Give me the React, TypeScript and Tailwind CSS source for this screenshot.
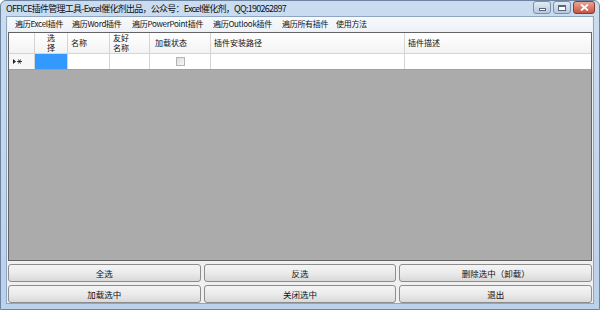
const menus = [
  { label: "遍历Excel插件", w: "w-[57px]" },
  { label: "遍历Word插件", w: "w-[60px]" },
  { label: "遍历PowerPoint插件", w: "w-[81px]" },
  { label: "遍历Outlook插件", w: "w-[69px]" },
  { label: "遍历所有插件", w: "w-[54px]" },
  { label: "使用方法", w: "w-[50px]" },
];

const cols = [
  { key: "row", w: "w-[26px]" },
  { key: "sel", w: "w-[33px]" },
  { key: "name", w: "w-[42px]" },
  { key: "friendly", w: "w-[40px]" },
  { key: "state", w: "w-[61px]" },
  { key: "path", w: "w-[194px]" },
  { key: "desc", w: "flex-1" },
];

function WinButton({ kind }: { kind: "min" | "max" | "close" }) {
  const base = "h-[13px] flex items-center justify-center rounded-[3px] border";
  if (kind === "close") {
    return (
      <div className={`${base} w-[22px] border-[#8a3b30] bg-gradient-to-b from-[#e8a595] to-[#c7523f]`}>
        <svg width="9" height="7" viewBox="0 0 9 7">
          <path d="M1 0.5 L8 6.5 M8 0.5 L1 6.5" stroke="#fff" strokeWidth="1.8" />
        </svg>
      </div>
    );
  }
  return (
    <div className={`${base} w-[18px] border-[#7d8fa8] bg-gradient-to-b from-[#e3ebf5] to-[#b7c8dd]`}>
      {kind === "min" ? (
        <div className="w-[7px] h-[3px] mt-[4px] bg-white border border-[#59677a]" />
      ) : (
        <div className="w-[8px] h-[6px] bg-white border border-[#59677a] border-t-2" />
      )}
    </div>
  );
}

function Btn({ label }: { label: string }) {
  return (
    <button className="flex-1 h-[18px] rounded-[3px] border border-[#8d8d8d] bg-gradient-to-b from-[#f4f4f4] via-[#ebebeb] to-[#d9d9d9] text-[8.5px] leading-none text-[#111]">
      {label}
    </button>
  );
}

export default function App() {
  return (
    <div
      className="w-[600px] h-[310px] flex flex-col bg-gradient-to-b from-[#cadcf0] to-[#bcd1ea] border border-[#6d84a0] rounded-t-[6px] overflow-hidden"
      style={{ fontFamily: '"Noto Sans CJK SC", "Noto Sans", sans-serif' }}
    >
      {/* Title bar */}
      <div className="h-[20px] flex items-center pl-[5px] pr-[4px]">
        <span className="text-[9px] leading-none text-[#111] tracking-[-0.75px] whitespace-nowrap">
          OFFICE插件管理工具-Excel催化剂出品，公众号：Excel催化剂，QQ:190262897
        </span>
        <div className="ml-auto flex gap-[2px] mt-[-2px]">
          <WinButton kind="min" />
          <WinButton kind="max" />
          <WinButton kind="close" />
        </div>
      </div>

      {/* Client area */}
      <div className="flex-1 mx-[5px] mb-[5px] bg-[#f0f0f0] border border-[#8fa6c2] flex flex-col px-[1px]">
        {/* Menu */}
        <div className="h-[14px] flex items-center pl-[7px] bg-gradient-to-b from-[#f8fafc] to-[#eef2f7] text-[8px] leading-none text-[#111]">
          {menus.map((m) => (
            <span key={m.label} className={`${m.w} whitespace-nowrap tracking-[-0.3px]`}>{m.label}</span>
          ))}
        </div>

        {/* Grid */}
        <div className="mt-[1px] h-[229px] border border-[#646464] bg-[#ababab] flex flex-col">
          <div className="h-[21px] flex bg-gradient-to-b from-white to-[#f3f3f3] border-b border-[#d5d5d5] text-[8px] text-[#111] leading-none">
            <div className={`${cols[0].w} border-r border-[#d5d5d5]`} />
            <div className={`${cols[1].w} border-r border-[#d5d5d5] flex flex-col items-center justify-center leading-[10px] overflow-hidden`}>
              <span>选</span>
              <span>择</span>
            </div>
            <div className={`${cols[2].w} border-r border-[#d5d5d5] pl-[3px] pt-[6px]`}>名称</div>
            <div className={`${cols[3].w} border-r border-[#d5d5d5] pl-[3px] flex flex-col justify-center leading-[10px]`}>
              <span>友好</span>
              <span>名称</span>
            </div>
            <div className={`${cols[4].w} border-r border-[#d5d5d5] pl-[5px] pt-[6px]`}>加载状态</div>
            <div className={`${cols[5].w} border-r border-[#d5d5d5] pl-[3px] pt-[6px]`}>插件安装路径</div>
            <div className={`${cols[6].w} pl-[3px] pt-[6px]`}>插件描述</div>
          </div>
          <div className="h-[16px] flex bg-white border-b border-[#a0a0a0]">
            <div className={`${cols[0].w} border-r border-[#d5d5d5] bg-[#f7f7f7] flex items-center pl-[4px]`}>
              <svg width="9" height="5" viewBox="0 0 9 5">
                <path d="M0 0 L3 2.5 L0 5 Z" fill="#222" />
                <path d="M4 2.5 H9 M5.5 0.5 L7.5 4.5 M7.5 0.5 L5.5 4.5" stroke="#222" strokeWidth="0.9" />
              </svg>
            </div>
            <div className={`${cols[1].w} border-r border-[#d5d5d5] bg-[#3399ff]`} />
            <div className={`${cols[2].w} border-r border-[#d5d5d5]`} />
            <div className={`${cols[3].w} border-r border-[#d5d5d5]`} />
            <div className={`${cols[4].w} border-r border-[#d5d5d5] flex items-center justify-center`}>
              <div className="w-[9px] h-[9px] border border-[#b4b4b4] bg-gradient-to-br from-[#dedede] to-[#f7f7f7]" />
            </div>
            <div className={`${cols[5].w} border-r border-[#d5d5d5]`} />
            <div className={cols[6].w} />
          </div>
        </div>

        {/* Buttons */}
        <div className="mt-[3px] flex flex-col gap-[3px]">
          <div className="flex gap-[3px]">
            <Btn label="全选" />
            <Btn label="反选" />
            <Btn label="删除选中（卸载）" />
          </div>
          <div className="flex gap-[3px]">
            <Btn label="加载选中" />
            <Btn label="关闭选中" />
            <Btn label="退出" />
          </div>
        </div>
      </div>
    </div>
  );
}
